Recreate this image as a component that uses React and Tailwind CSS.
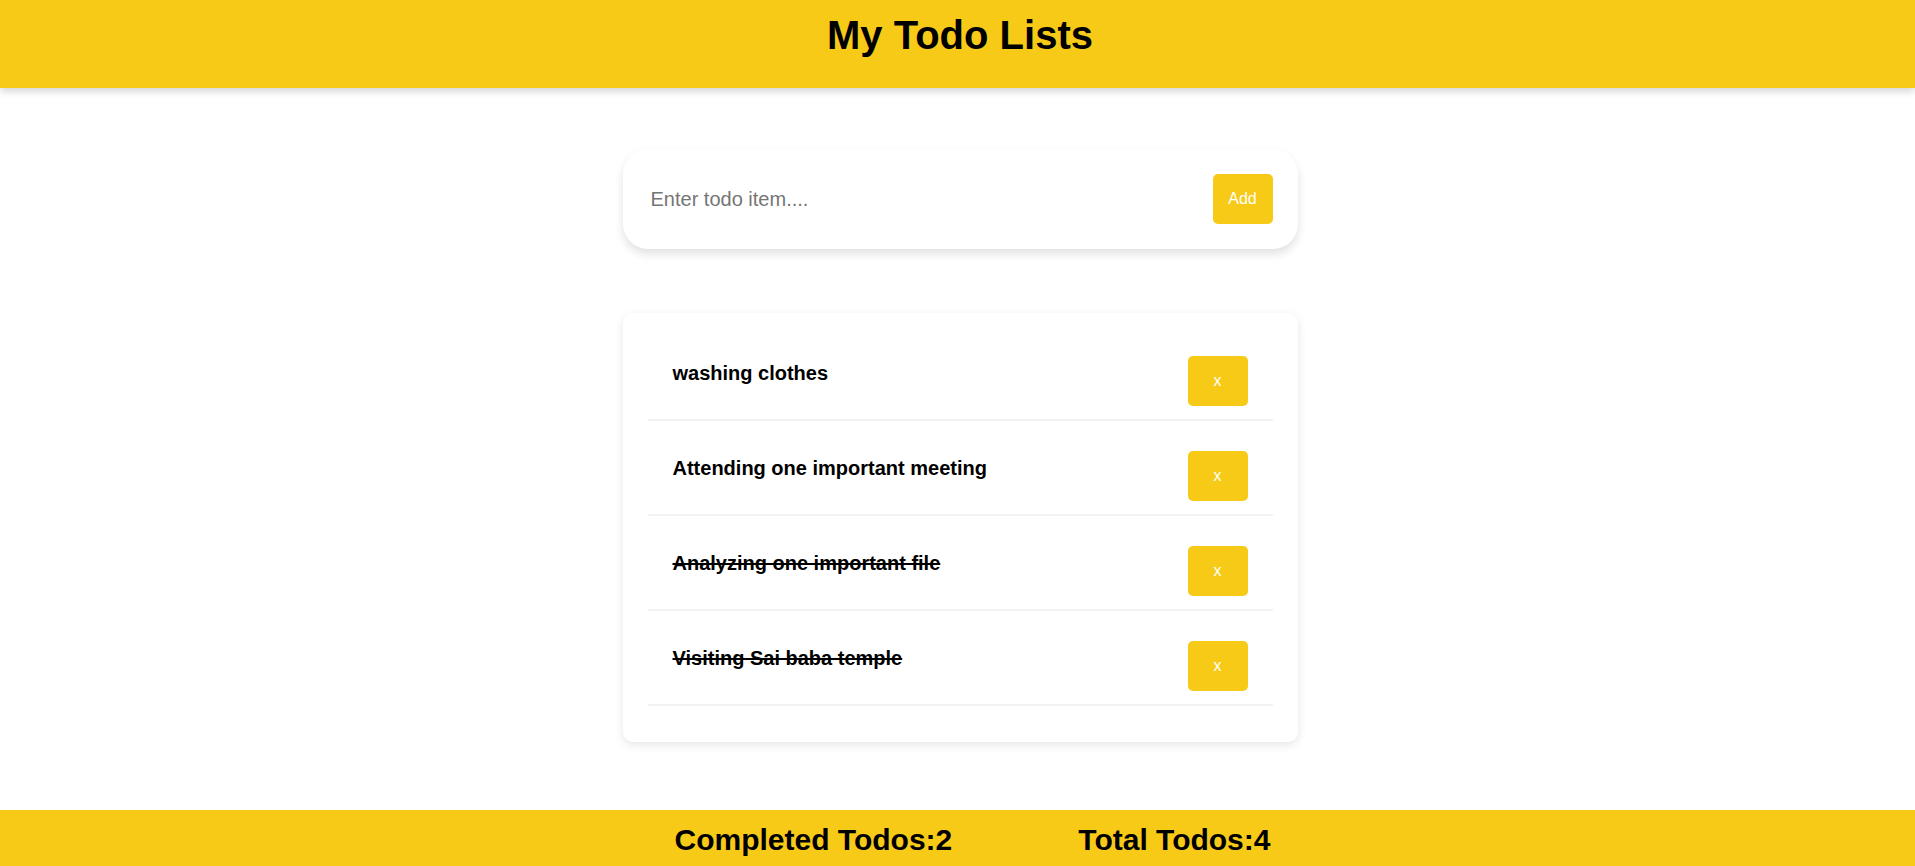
import React from "react";

const todos = [
  { text: "washing clothes", done: false },
  { text: "Attending one important meeting", done: false },
  { text: "Analyzing one important file", done: true },
  { text: "Visiting Sai baba temple", done: true },
];

export default function App() {
  return (
    <div
      className="flex h-screen flex-col bg-white text-black"
      style={{ fontFamily: '"Liberation Sans", Arial, sans-serif' }}
    >
      <header className="relative z-10 h-[88px] bg-[#f7ca18] pl-[5px] pt-[12px] shadow-[0_3px_8px_rgba(0,0,0,0.18)]">
        <h1 className="text-center text-[40px] font-bold leading-[46px]">My Todo Lists</h1>
      </header>

      <main className="flex-1 pl-[5px]">
        <div className="mx-auto mt-[61px] flex h-[100px] w-[675px] items-center rounded-[25px] bg-white pl-[28px] pr-[25px] shadow-[0_5px_10px_rgba(0,0,0,0.12)]">
          <input
            type="text"
            placeholder="Enter todo item...."
            className="flex-1 bg-transparent text-[20px] text-black outline-none placeholder:text-[#757575]"
          />
          <button className="h-[50px] w-[60px] rounded-[5px] bg-[#f7ca18] text-[16px] text-white">
            Add
          </button>
        </div>

        <div className="mx-auto mt-[64px] w-[675px] rounded-[10px] bg-white px-[25px] pb-[36px] pt-[13px] shadow-[0_3px_10px_rgba(0,0,0,0.1)]">
          {todos.map((t) => (
            <div
              key={t.text}
              className="flex h-[95px] items-start justify-between border-b-2 border-[#f2f2f2] px-[25px] pt-[30px]"
            >
              <span
                className={
                  "mt-[6px] text-[20px] font-bold leading-[23px] " +
                  (t.done ? "line-through" : "")
                }
              >
                {t.text}
              </span>
              <button className="h-[50px] w-[60px] rounded-[5px] bg-[#f7ca18] text-[16px] text-white">
                x
              </button>
            </div>
          ))}
        </div>
      </main>

      <footer className="flex h-[56px] items-center justify-center gap-[126px] bg-[#f7ca18] pl-[30px] pt-[3px] text-[30px] font-bold">
        <span>Completed Todos:2</span>
        <span>Total Todos:4</span>
      </footer>
    </div>
  );
}
